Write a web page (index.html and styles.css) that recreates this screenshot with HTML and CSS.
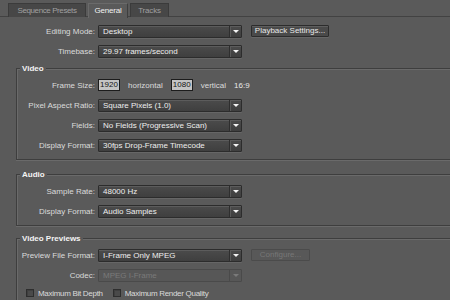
FILE: index.html
```html
<!DOCTYPE html>
<html lang="en">
<head>
    <title>Sequence Settings</title>
    <meta charset="utf-8">
    <link rel="stylesheet" href="styles.css">
</head>

<body>
    <div class="tabs">
        <span class="tab">Sequence Presets</span>
        <span class="tab active">General</span>
        <span class="tab">Tracks</span>
    </div>

    <div class="content">
        <div class="row">
            <span class="lbl">Editing Mode:</span>
            <div class="select"><span class="val">Desktop</span><span class="arrow"></span></div>
            <span class="btn">Playback Settings...</span>
        </div>
        <div class="row">
            <span class="lbl">Timebase:</span>
            <div class="select"><span class="val">29.97 frames/second</span><span class="arrow"></span></div>
        </div>

        <div class="group">
            <span class="legend">Video</span>
            <div class="row">
                <span class="lbl">Frame Size:</span>
                <span class="num">1920</span>
                <span class="txt">horizontal</span>
                <span class="num">1080</span>
                <span class="txt">vertical</span>
                <span class="ratio">16:9</span>
            </div>
            <div class="row">
                <span class="lbl">Pixel Aspect Ratio:</span>
                <div class="select"><span class="val">Square Pixels (1.0)</span><span class="arrow"></span></div>
            </div>
            <div class="row">
                <span class="lbl">Fields:</span>
                <div class="select"><span class="val">No Fields (Progressive Scan)</span><span class="arrow"></span></div>
            </div>
            <div class="row">
                <span class="lbl">Display Format:</span>
                <div class="select"><span class="val">30fps Drop-Frame Timecode</span><span class="arrow"></span></div>
            </div>
        </div>

        <div class="group audio">
            <span class="legend">Audio</span>
            <div class="row">
                <span class="lbl">Sample Rate:</span>
                <div class="select"><span class="val">48000 Hz</span><span class="arrow"></span></div>
            </div>
            <div class="row">
                <span class="lbl">Display Format:</span>
                <div class="select"><span class="val">Audio Samples</span><span class="arrow"></span></div>
            </div>
        </div>

        <div class="group previews">
            <span class="legend">Video Previews</span>
            <div class="row">
                <span class="lbl">Preview File Format:</span>
                <div class="select"><span class="val">I-Frame Only MPEG</span><span class="arrow"></span></div>
                <span class="btn disabled">Configure...</span>
            </div>
            <div class="row">
                <span class="lbl">Codec:</span>
                <div class="select disabled"><span class="val">MPEG I-Frame</span><span class="arrow"></span></div>
            </div>
            <div class="checks">
                <span class="check"></span><span class="clbl">Maximum Bit Depth</span>
                <span class="check"></span><span class="clbl">Maximum Render Quality</span>
            </div>
        </div>
    </div>
</body>
</html>
```

FILE: styles.css
```css
html, body {
    margin: 0;
    height: 100%;
    overflow: hidden;
}

body {
    background: #5a5a5a;
    font-family: "Liberation Sans", Arial, sans-serif;
    font-size: 8px;
    color: #dadada;
}

/* tab strip */
.tabs {
    display: flex;
    gap: 2px;
    height: 17px;
    padding: 3px 0 0 8px;
    box-sizing: border-box;
    border-bottom: 1px solid #424242;
}

.tab {
    width: 39px;
    height: 14px;
    line-height: 13px;
    box-sizing: border-box;
    text-align: center;
    letter-spacing: -0.2px;
    background: #474747;
    border: 1px solid #3b3b3b;
    border-bottom: none;
    color: #a0a0a0;
}

.tab:first-child {
    width: 78px;
    letter-spacing: -0.4px;
}

.active {
    width: 40px;
    height: 15px;
    background: #5a5a5a;
    border-color: #6a6a6a #3e3e3e #5a5a5a #6a6a6a;
    color: #f2f2f2;
}

.content {
    padding-top: 4px;
}

.row {
    display: flex;
    align-items: center;
    height: 20px;
}

.lbl {
    width: 95px;
    margin-right: 3px;
    text-align: right;
    color: #dadada;
    white-space: nowrap;
}

/* dropdowns */
.select {
    display: flex;
    width: 144px;
    height: 13px;
    box-sizing: border-box;
    border: 1px solid #2c2c2c;
    border-radius: 1px;
    background: linear-gradient(#4b4b4b, #3f3f3f);
    box-shadow: inset 0 1px 0 #5c5c5c, 0 1px 0 #666;
    color: #eeeeee;
}

.val {
    flex: 1;
    padding-left: 4px;
    line-height: 11px;
    white-space: nowrap;
}

.arrow {
    display: flex;
    align-items: center;
    justify-content: center;
    width: 11px;
    border-left: 1px solid #2e2e2e;
    box-shadow: inset 1px 0 0 #5a5a5a;
}

.arrow::before {
    content: "";
    border-left: 3px solid transparent;
    border-right: 3px solid transparent;
    border-top: 3px solid #f4f4f4;
}

.select.disabled {
    border-color: #4a4a4a;
    background: #575757;
    box-shadow: none;
    color: #7a7a7a;
}

.select.disabled .arrow {
    border-left-color: #4a4a4a;
    box-shadow: none;
}

.select.disabled .arrow::before {
    border-top-color: #7a7a7a;
}

/* buttons */
.btn {
    margin-left: 9px;
    width: 78px;
    height: 12px;
    line-height: 10px;
    box-sizing: border-box;
    text-align: center;
    border: 1px solid #2c2c2c;
    border-radius: 1px;
    background: #4a4a4a;
    box-shadow: inset 0 1px 0 #5e5e5e, 0 1px 0 #666;
    color: #e8e8e8;
}

.btn.disabled {
    width: 59px;
    border-color: #4b4b4b;
    background: #585858;
    box-shadow: none;
    color: #777;
}

/* frame size */
.num {
    width: 22px;
    height: 12px;
    line-height: 10px;
    box-sizing: border-box;
    border: 1px solid #1c1c1c;
    background: #c4c4c4;
    color: #151515;
    text-align: center;
}

.txt {
    margin: 0 8px;
}

.ratio {
    color: #e8e8e8;
}

/* group boxes */
.group {
    position: relative;
    margin: 7px -10px 0 16px;
    padding: 6px 0 4px;
    border: 1px solid #3e3e3e;
    box-shadow: inset 1px 1px 0 #6a6a6a, 0 1px 0 #6a6a6a;
}

.group .lbl {
    width: 78px;
}

.audio {
    margin-top: 14px;
}

.previews {
    margin-top: 12px;
}

.legend {
    position: absolute;
    top: -6px;
    left: 3px;
    padding: 0 2px;
    background: #5a5a5a;
    font-weight: bold;
    color: #f4f4f4;
    line-height: 11px;
}

.checks {
    display: flex;
    align-items: center;
    height: 16px;
    padding-left: 9px;
}

.check {
    width: 8px;
    height: 8px;
    box-sizing: border-box;
    border: 1px solid #2e2e2e;
    background: #4a4a4a;
    box-shadow: inset 1px 1px 0 #3f3f3f;
    margin-right: 4px;
}

.clbl {
    margin-right: 10px;
    letter-spacing: -0.3px;
    color: #dadada;
}
```
